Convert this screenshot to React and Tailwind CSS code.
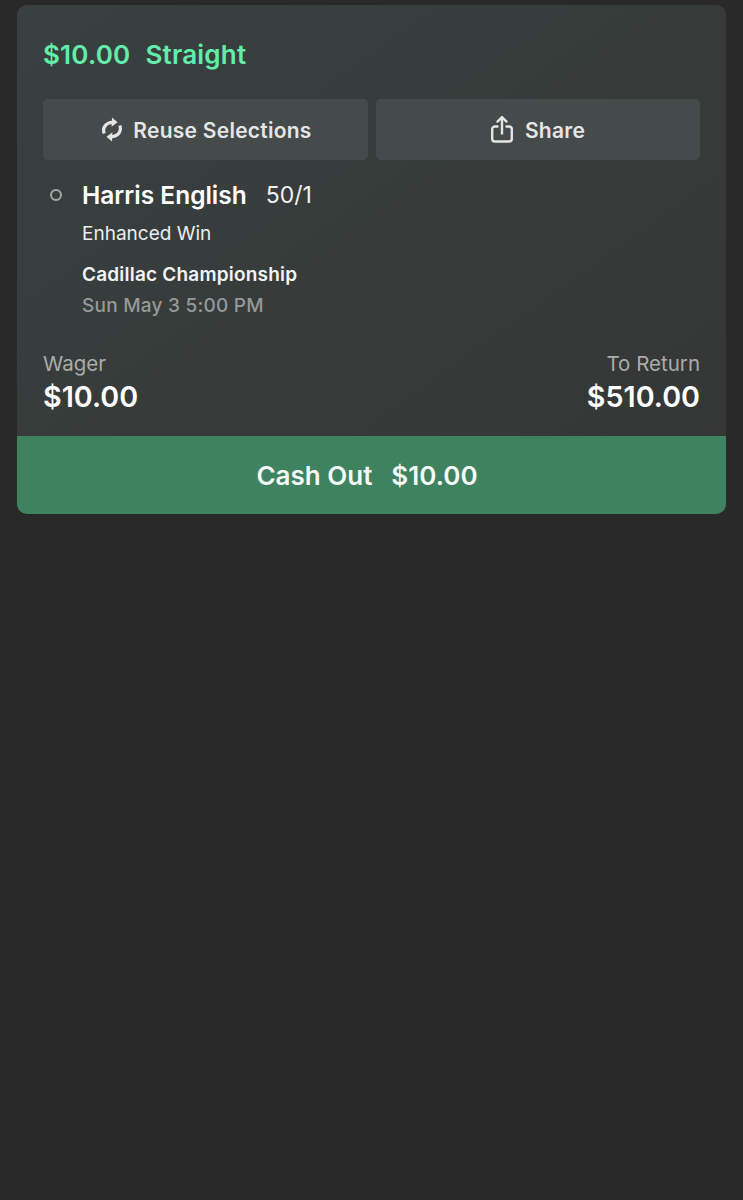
const RefreshIcon = () => (
  <svg width="22" height="25" viewBox="0 0 22 25" fill="none" stroke="#e4e6e5" strokeWidth="3.2">
    <path d="M3.2 16.5C1.2 11 4.5 5.6 11.5 5.4" />
    <path d="M18.8 8.5C20.8 14 17.5 19.4 10.5 19.6" />
    <path d="M11 0.6L16.5 5.2L10.6 9.8Z" fill="#e4e6e5" stroke="none" />
    <path d="M11 24.4L5.5 19.8L11.4 15.2Z" fill="#e4e6e5" stroke="none" />
  </svg>
);

const ShareIcon = () => (
  <svg width="22" height="27" viewBox="0 0 22 27" fill="none" stroke="#e4e6e5" strokeWidth="2.4" strokeLinecap="round" strokeLinejoin="round">
    <path d="M6.5 10.5H4C2.3 10.5 1.2 11.6 1.2 13.3V22.7C1.2 24.4 2.3 25.5 4 25.5H18C19.7 25.5 20.8 24.4 20.8 22.7V13.3C20.8 11.6 19.7 10.5 18 10.5H15.5" />
    <path d="M11 17.5V1.5" />
    <path d="M6.5 5.6L11 1.2L15.5 5.6" />
  </svg>
);

const App = () => {
  return (
    <div className="min-h-[1200px] bg-[#292929] px-[17px] pt-[5px] font-['Inter',sans-serif]">
      <div className="rounded-[10px] overflow-hidden bg-gradient-to-br from-[#384140] to-[#353635]">
        <div className="px-[26px] pt-[33px] pb-[21px]">
          {/* Header */}
          <div className="flex gap-[15px] text-[26px] leading-[33px] tracking-[0.2px] font-semibold text-[#64ecaa]">
            <span>$10.00</span>
            <span>Straight</span>
          </div>

          {/* Actions */}
          <div className="flex gap-[8px] mt-[28px]">
            <button className="w-[325px] h-[61px] pl-[2px] rounded-[5px] bg-[#454b4a] flex items-center justify-center gap-[10px] text-[21px] tracking-[0.25px] font-semibold text-[#e4e6e5]">
              <RefreshIcon />
              <span className="mt-[2px]">Reuse Selections</span>
            </button>
            <button className="flex-1 h-[61px] rounded-[5px] bg-[#454b4a] flex items-center justify-center gap-[12px] text-[21px] tracking-[0.25px] font-semibold text-[#e4e6e5]">
              <ShareIcon />
              <span className="mt-[2px]">Share</span>
            </button>
          </div>

          {/* Selection */}
          <div className="flex mt-[21px]">
            <div className="w-[39px] pl-[7px] pt-[8px] shrink-0">
              <div className="w-[12px] h-[12px] rounded-full border-2 border-[#a5a8a7]" />
            </div>
            <div className="-mt-[1px]">
              <div className="flex items-center gap-[19px] h-[30px]">
                <span className="text-[24.5px] font-semibold text-white">Harris English</span>
                <span className="text-[23px] text-[#f0f1f1]">50/1</span>
              </div>
              <div className="text-[19px] leading-[24px] text-[#eceded] mt-[12px]">Enhanced Win</div>
              <div className="text-[19px] leading-[24px] tracking-[0.2px] font-semibold text-[#f2f3f3] mt-[17px]">Cadillac Championship</div>
              <div className="text-[19px] leading-[24px] tracking-[0.25px] font-medium text-[#969998] mt-[7px]">Sun May 3 5:00 PM</div>
            </div>
          </div>

          {/* Totals */}
          <div className="flex justify-between mt-[33px]">
            <div>
              <div className="text-[20.5px] leading-[26px] text-[#a9acab]">Wager</div>
              <div className="text-[28.7px] leading-[36px] font-semibold text-white mt-[2px]">$10.00</div>
            </div>
            <div className="text-right">
              <div className="text-[20.5px] leading-[26px] text-[#a9acab]">To Return</div>
              <div className="text-[28.7px] leading-[36px] font-semibold text-white mt-[2px]">$510.00</div>
            </div>
          </div>
        </div>

        {/* Cash out */}
        <div className="h-[78px] pr-[9px] bg-[#3e8260] flex items-center justify-center gap-[19px] text-[26px] font-semibold text-[#f4f8f6]">
          <span>Cash Out</span>
          <span>$10.00</span>
        </div>
      </div>
    </div>
  );
};

export default App;
